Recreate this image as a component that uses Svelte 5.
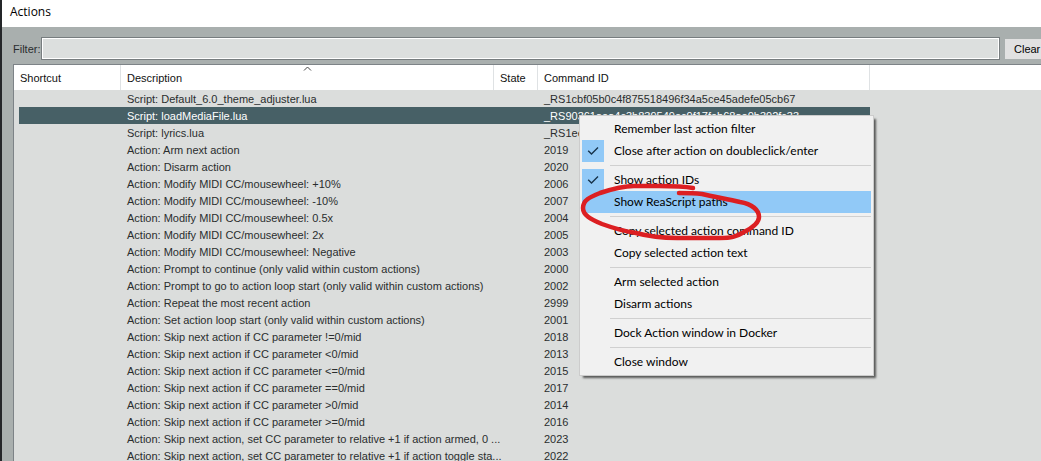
<script>
  const actions = [
    ['Script: Default_6.0_theme_adjuster.lua', '_RS1cbf05b0c4f875518496f34a5ce45adefe05cb67'],
    ['Script: loadMediaFile.lua', '_RS90361aea4c3b839549ec9f17feb68ae0b392fc33'],
    ['Script: lyrics.lua', '_RS1ee'],
    ['Action: Arm next action', '2019'],
    ['Action: Disarm action', '2020'],
    ['Action: Modify MIDI CC/mousewheel: +10%', '2006'],
    ['Action: Modify MIDI CC/mousewheel: -10%', '2007'],
    ['Action: Modify MIDI CC/mousewheel: 0.5x', '2004'],
    ['Action: Modify MIDI CC/mousewheel: 2x', '2005'],
    ['Action: Modify MIDI CC/mousewheel: Negative', '2003'],
    ['Action: Prompt to continue (only valid within custom actions)', '2000'],
    ['Action: Prompt to go to action loop start (only valid within custom actions)', '2002'],
    ['Action: Repeat the most recent action', '2999'],
    ['Action: Set action loop start (only valid within custom actions)', '2001'],
    ['Action: Skip next action if CC parameter !=0/mid', '2018'],
    ['Action: Skip next action if CC parameter <0/mid', '2013'],
    ['Action: Skip next action if CC parameter <=0/mid', '2015'],
    ['Action: Skip next action if CC parameter ==0/mid', '2017'],
    ['Action: Skip next action if CC parameter >0/mid', '2014'],
    ['Action: Skip next action if CC parameter >=0/mid', '2016'],
    ['Action: Skip next action, set CC parameter to relative +1 if action armed, 0 ...', '2023'],
    ['Action: Skip next action, set CC parameter to relative +1 if action toggle sta...', '2022'],
  ];

  const menu = [
    [{ label: 'Remember last action filter' }, { label: 'Close after action on doubleclick/enter', checked: true }],
    [{ label: 'Show action IDs', checked: true }, { label: 'Show ReaScript paths', hot: true }],
    [{ label: 'Copy selected action command ID' }, { label: 'Copy selected action text' }],
    [{ label: 'Arm selected action' }, { label: 'Disarm actions' }],
    [{ label: 'Dock Action window in Docker' }],
    [{ label: 'Close window' }],
  ];

  let selected = $state(1);
  let filter = $state('');
</script>

<div class="window">
  <header class="title">Actions</header>
  <div class="body">
    <div class="filter">
      <label for="filter">Filter:</label>
      <input id="filter" type="text" bind:value={filter} />
      <button type="button" onclick={() => (filter = '')}>Clear</button>
    </div>
    <div class="list">
      <table>
        <colgroup>
          <col class="c-shortcut" /><col class="c-desc" /><col class="c-state" /><col class="c-id" /><col />
        </colgroup>
        <thead>
          <tr>
            <th>Shortcut</th>
            <th>
              Description
              <svg class="arrow" viewBox="0 0 9 5" width="9" height="5" aria-hidden="true">
                <path d="M1 4.5 4.5 1 8 4.5" fill="none" stroke="#444" />
              </svg>
            </th>
            <th>State</th>
            <th>Command ID</th>
            <th></th>
          </tr>
        </thead>
        <tbody>
          {#each actions as [name, id], i}
            <tr class:selected={i === selected} onclick={() => (selected = i)}>
              <td></td>
              <td>{name}</td>
              <td></td>
              <td>{id}</td>
              <td></td>
            </tr>
          {/each}
        </tbody>
      </table>
    </div>
  </div>

  <div class="menu" role="menu">
    {#each menu as group}
      <div class="group">
        {#each group as item}
          <button type="button" role="menuitem" class:hot={item.hot}>
            <span class="mark" class:on={item.checked}>
              {#if item.checked}
                <svg viewBox="0 0 12 10" width="12" height="10" aria-hidden="true">
                  <path d="M1.2 4.8 4.5 8 11 1.6" fill="none" stroke="#17334a" stroke-width="1.4" />
                </svg>
              {/if}
            </span>
            <span>{item.label}</span>
          </button>
        {/each}
      </div>
    {/each}
  </div>

  <svg class="ink" viewBox="0 0 190 64" width="190" height="64" aria-hidden="true">
    <path
      d="M119 11C108 9 96 9 85 9H60C48 9 38 12 26 16C16 20 9 23 9 31C9 38 16 42 28 47C39 51 49 54 62 56C77 60 88 61 103 61H146C157 61 162 60 170 55C178 51 185 46 185 40C185 33 178 27 166 25C154 22 140 20 128 17C119 16 111 16 105 16"
      fill="none"
      stroke="#dc1f22"
      stroke-width="4.5"
      stroke-linecap="round"
      stroke-linejoin="round"
    />
  </svg>
</div>

<style>
  :global(body) {
    margin: 0;
    overflow: hidden;
  }
  .window {
    position: relative;
    box-sizing: border-box;
    height: 100vh;
    overflow: hidden;
    display: flex;
    flex-direction: column;
    border-left: 2px solid #242629;
    background: #a9afae;
    font: 11px/16px 'Liberation Sans', Arial, sans-serif;
    color: #2a2d2e;
  }
  .title {
    height: 27px;
    padding-left: 8px;
    box-sizing: border-box;
    background: #fff;
    color: #000;
    font: 12px/24px 'Open Sans', 'Noto Sans', sans-serif;
  }
  .body {
    flex: 1;
    min-height: 0;
    display: flex;
    flex-direction: column;
    gap: 4px;
    padding: 10px 0 0 11px;
    margin-right: -8px;
  }
  .filter {
    display: flex;
    align-items: center;
  }
  .filter label {
    width: 28px;
    white-space: nowrap;
  }
  .filter input {
    flex: 1;
    min-width: 0;
    height: 23px;
    box-sizing: border-box;
    border: 1px solid #777d7f;
    outline: 1px solid #fff;
    outline-offset: -2px;
    background: #dcdfde;
    font: inherit;
  }
  .filter button {
    width: 44px;
    height: 20px;
    margin-left: 5px;
    padding: 0 0 0 9px;
    border: 0;
    background: #e1e1e1;
    color: #000;
    font: inherit;
    text-align: left;
  }
  .list {
    flex: 1;
    min-height: 0;
    overflow: hidden;
    border: 1px solid #7d8387;
    border-bottom: 0;
    background: #dbdddc;
  }
  table {
    width: 100%;
    table-layout: fixed;
    border-collapse: separate;
    border-spacing: 0;
  }
  .c-shortcut { width: 107px; }
  .c-desc { width: 373px; }
  .c-state { width: 44px; }
  .c-id { width: 332px; }
  th {
    position: relative;
    height: 25px;
    box-sizing: border-box;
    padding: 1px 6px 0;
    border-right: 1px solid #dfe2e4;
    background: #fff;
    color: #111;
    font-weight: 400;
    text-align: left;
    white-space: nowrap;
  }
  th:last-child {
    border-right: 0;
  }
  .arrow {
    position: absolute;
    top: 1px;
    left: 50%;
    margin-left: -4px;
  }
  td {
    height: 16px;
    padding: 1px 0 0 6px;
    white-space: nowrap;
  }
  td:first-child {
    border-left: 5px solid transparent;
    background-clip: padding-box;
  }
  .selected td:not(:last-child) {
    background-color: #476066;
    color: #fff;
  }
  .menu {
    position: absolute;
    top: 115px;
    left: 577px;
    width: 295px;
    box-sizing: border-box;
    padding: 2px;
    border: 1px solid #ccc;
    background: #f1f1f1;
    box-shadow: 3px 3px 2px -1px rgba(0, 0, 0, 0.6);
  }
  .group + .group::before {
    content: '';
    display: block;
    height: 1px;
    margin: 3px 0 3px 28px;
    background: #d0d0d0;
  }
  .menu button {
    display: flex;
    align-items: center;
    gap: 10px;
    width: 100%;
    height: 22px;
    padding: 0;
    border: 0;
    background: none;
    color: #000;
    font: 12px/22px Lato, 'Open Sans', sans-serif;
    text-align: left;
    white-space: nowrap;
  }
  .menu button.hot,
  .mark.on {
    background: #91c9f7;
  }
  .mark {
    display: flex;
    align-items: center;
    justify-content: center;
    width: 22px;
    height: 22px;
  }
  .ink {
    position: absolute;
    top: 177px;
    left: 572px;
    pointer-events: none;
    overflow: visible;
  }
</style>
